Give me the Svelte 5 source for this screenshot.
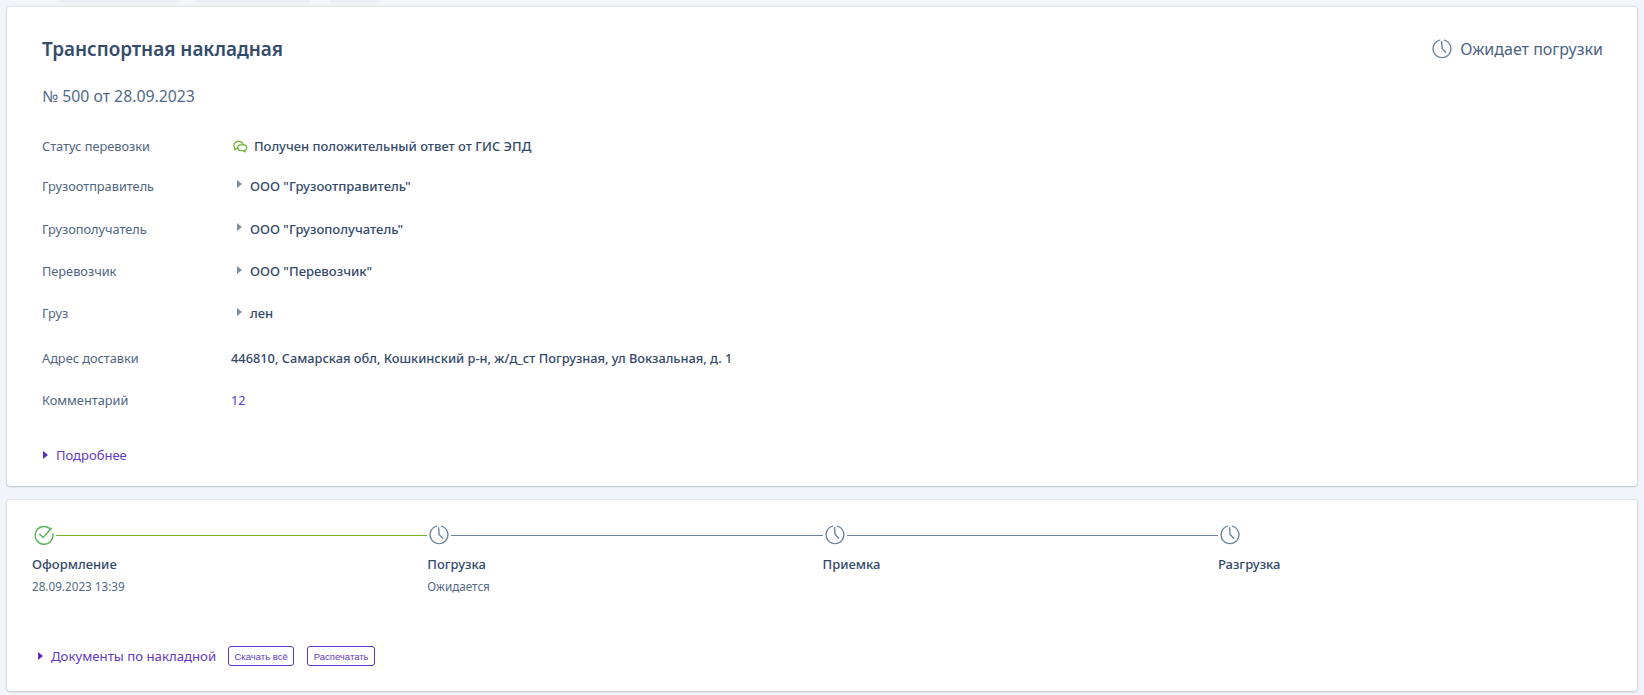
<script>
    const rows = [
        { label: 'Грузоотправитель', value: 'ООО "Грузоотправитель"', h: 42 },
        { label: 'Грузополучатель', value: 'ООО "Грузополучатель"', h: 44 },
        { label: 'Перевозчик', value: 'ООО "Перевозчик"', h: 41 },
        { label: 'Груз', value: 'лен', h: 43 }
    ];

    const steps = [
        { title: 'Оформление', sub: '28.09.2023 13:39', done: true },
        { title: 'Погрузка', sub: 'Ожидается', done: false },
        { title: 'Приемка', sub: '', done: false },
        { title: 'Разгрузка', sub: '', done: false, last: true }
    ];
</script>

{#snippet clock()}
    <svg class="clock" width="20" height="20" viewBox="0 0 20 20" fill="none">
        <path d="M7.6 1.2a8.9 8.9 0 1 0 4.8 0" stroke="#6f86a0" stroke-width="1.4" stroke-linecap="round" />
        <path d="M9.6 2.6l.5 7 3.6 3.6" stroke="#6f86a0" stroke-width="1.4" stroke-linecap="round" stroke-linejoin="round" />
    </svg>
{/snippet}

{#snippet caret(cls)}
    <span class="caret {cls}"></span>
{/snippet}

<div class="page">
    <div class="top-strip">
        <span style="width: 117px"></span>
        <span style="width: 113px"></span>
        <span style="width: 47px"></span>
    </div>

    <section class="card main">
        <header class="head">
            <h1>Транспортная накладная</h1>
            <div class="state">
                {@render clock()}
                <span>Ожидает погрузки</span>
            </div>
        </header>
        <div class="number">№ 500 от 28.09.2023</div>

        <div class="rows">
            <div class="row status-row">
                <div class="label">Статус перевозки</div>
                <div class="value status">
                    <svg width="15" height="13" viewBox="0 0 15 13" fill="none" stroke="#6fb52c" stroke-width="1.2" stroke-linejoin="round" stroke-linecap="round">
                        <path d="M5 8.4H3.4L1.7 9.8V7.6A3.3 3.3 0 0 1 .9 5.4C.9 3 3 1.4 5.6 1.4c2.2 0 4.1 1.2 4.6 3" />
                        <path d="M7.6 4.8h3.4a2.9 2.9 0 0 1 .9 5.6v1.5l-1.7-1.3H7.6a2.9 2.9 0 0 1 0-5.8z" />
                    </svg>
                    <span>Получен положительный ответ от ГИС ЭПД</span>
                </div>
            </div>

            {#each rows as r}
                <div class="row" style="height: {r.h}px">
                    <div class="label">{r.label}</div>
                    <div class="value expand">
                        {@render caret('grey')}
                        <span>{r.value}</span>
                    </div>
                </div>
            {/each}

            <div class="row address">
                <div class="label">Адрес доставки</div>
                <div class="value">446810, Самарская обл, Кошкинский р-н, ж/д_ст Погрузная, ул Вокзальная, д. 1</div>
            </div>
            <div class="row comment-row">
                <div class="label">Комментарий</div>
                <div class="value comment">12</div>
            </div>
        </div>

        <div class="more">
            {@render caret('violet')}
            <span>Подробнее</span>
        </div>
    </section>

    <section class="card track">
        <div class="steps">
            {#each steps as s}
                <div class="step" class:last={s.last}>
                    <div class="line-wrap">
                        {#if s.done}
                            <svg class="check" width="20" height="20" viewBox="0 0 20 20" fill="none">
                                <path d="M15.6 3.4A8.9 8.9 0 1 0 18.9 9" stroke="#55b257" stroke-width="1.4" stroke-linecap="round" />
                                <path d="M5.8 9.2l3.4 3.2 8.2-9.2" stroke="#55b257" stroke-width="1.4" stroke-linecap="round" stroke-linejoin="round" />
                            </svg>
                        {:else}
                            {@render clock()}
                        {/if}
                        {#if !s.last}
                            <div class="line" class:green={s.done}></div>
                        {/if}
                    </div>
                    <div class="step-title">{s.title}</div>
                    {#if s.sub}
                        <div class="step-sub">{s.sub}</div>
                    {/if}
                </div>
            {/each}
        </div>

        <div class="docs">
            {@render caret('violet')}
            <span class="docs-link">Документы по накладной</span>
            <button class="download">Скачать всё</button>
            <button class="print">Распечатать</button>
        </div>
    </section>
</div>

<style>
    :global(body) { margin: 0; background: #f1f5f9; }
    .page { height: 695px; overflow: hidden; box-sizing: border-box; padding: 0 7px; font-family: "Noto Sans", "Open Sans", sans-serif; color: #2b405f; position: relative; }
    .top-strip { display: flex; gap: 20px; height: 7px; padding-left: 53px; }
    .top-strip span { display: block; height: 2px; background: #e9eef5; box-shadow: 0 0 3px #e9eef5; }

    .card { background: #fff; border-radius: 3px; box-shadow: 0 0 2px rgba(60, 70, 90, 0.3), 0 1px 2px rgba(60, 70, 90, 0.2); box-sizing: border-box; }
    .main { height: 479px; padding: 0 35px; }
    .track { height: 191px; margin-top: 14px; padding: 24px 25px 0; }

    .head { display: flex; justify-content: space-between; align-items: center; height: 51px; padding-top: 16px; }
    h1 { margin: 0; font-size: 18.9px; font-weight: 600; line-height: 26px; color: #344c6c; }
    .state { display: flex; align-items: center; gap: 8px; font-size: 16px; color: #4b6383; margin-right: -1px; }
    .number { font-size: 15.8px; line-height: 22px; color: #536a87; margin-top: 11px; }

    .rows { margin-top: 20.5px; }
    .row { display: flex; align-items: center; font-size: 12.75px; box-sizing: border-box; }
    .status-row { height: 37px; }
    .address { height: 46px; }
    .comment-row { height: 38px; }
    .label { width: 191px; flex: none; color: #4f6580; }
    .value { font-weight: 500; font-size: 12.8px; color: #33496a; margin-left: -2px; }
    .comment { font-weight: 400; color: #5c3cc4; margin-left: -2px; }
    .status { display: flex; align-items: center; gap: 6px; margin-left: 0; font-size: 12.95px; }
    .status svg { flex: none; }
    .expand { display: flex; align-items: center; gap: 8px; margin-left: 4px; font-size: 13.05px; }

    .caret { display: inline-block; width: 0; height: 0; border-style: solid; border-width: 4px 0 4px 5px; border-color: transparent; flex: none; }
    .caret.grey { border-left-color: #7d8f9f; margin-top: -3px; }
    .caret.violet { border-left-color: #5b30c0; }

    .more { display: flex; align-items: center; gap: 8px; margin: 27px 0 0 1px; font-size: 13px; color: #6239c4; }

    .steps { display: flex; }
    .step { width: 395.3px; flex: none; }
    .step.last { width: auto; flex: 1; }
    .line-wrap { display: flex; align-items: center; gap: 2px; height: 22px; padding-left: 2px; }
    .clock, .check { flex: none; }
    .line { flex: 1; height: 1px; background: #6e819b; }
    .line.green { background: #6fb52c; }
    .step-title { font-size: 13px; font-weight: 500; line-height: 18px; margin-top: 9px; color: #33496a; }
    .step-sub { font-size: 11.7px; line-height: 16px; margin-top: 5px; color: #536a87; }

    .docs { display: flex; align-items: center; margin-top: 51px; padding-left: 6px; font-size: 13.2px; color: #6239c4; height: 22px; }
    .docs-link { margin-left: 8px; margin-right: 12px; }
    button { font-family: "Liberation Sans", sans-serif; font-size: 9.5px; color: #6239c4; background: #fff; border: 1px solid #5f35c5; border-radius: 3px; height: 20px; padding: 0; margin-right: 13px; }
    .download { width: 66px; }
    .print { width: 68px; }
</style>
